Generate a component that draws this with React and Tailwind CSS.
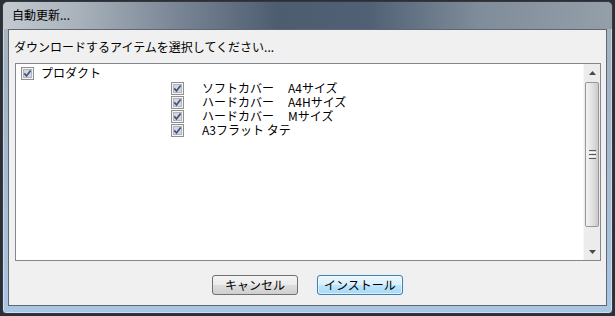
import React from "react";

const font = { fontFamily: '"Noto Sans CJK JP", "Noto Sans", sans-serif' };

function CheckBox() {
  return (
    <svg width="13" height="13" viewBox="0 0 13 13" className="shrink-0">
      <rect x="0.5" y="0.5" width="12" height="12" fill="#f4f4f4" stroke="#8e8f8f" />
      <rect x="2.5" y="2.5" width="8" height="8" fill="#d6d7d9" stroke="#b1b4b8" />
      <path d="M3.3 6.4 L5.5 9 L9.6 3.4" stroke="#3f5289" strokeWidth="1.7" fill="none" />
    </svg>
  );
}

function Row({ indent, children }) {
  return (
    <div className={`flex h-[14px] items-center ${indent ? "pl-[155px]" : "pl-[5px]"}`}>
      <CheckBox />
      <div className={`${indent ? "ml-[18px]" : "ml-[7px]"} flex text-[12px] leading-[12px] text-black whitespace-nowrap`}>
        {children}
      </div>
    </div>
  );
}

function Arrow({ up }) {
  return (
    <svg width="7" height="4" viewBox="0 0 7 4">
      <path d={up ? "M0 4 L3.5 0 L7 4 Z" : "M0 0 L3.5 4 L7 0 Z"} fill="#4a4a4a" />
    </svg>
  );
}

function ScrollBar() {
  return (
    <div className="flex w-[17px] flex-col bg-[#ececec] border-l border-[#f7f7f7]">
      <div className="flex h-[18px] items-center justify-center">
        <Arrow up />
      </div>
      <div className="mx-[1px] flex h-[145px] items-center justify-center rounded-[2px] border border-[#979797] bg-[linear-gradient(90deg,#f3f3f3_0%,#e2e2e2_50%,#cacaca_100%)]">
        <div className="flex flex-col gap-[1px]">
          <div className="h-[1px] w-[7px] bg-[#5a5a5a]" />
          <div className="h-[1px] w-[7px] bg-[#fafafa]" />
          <div className="h-[1px] w-[7px] bg-[#5a5a5a]" />
          <div className="h-[1px] w-[7px] bg-[#fafafa]" />
          <div className="h-[1px] w-[7px] bg-[#5a5a5a]" />
        </div>
      </div>
      <div className="flex-1" />
      <div className="flex h-[17px] items-center justify-center">
        <Arrow />
      </div>
    </div>
  );
}

export default function App() {
  return (
    <div className="h-[316px] w-[615px] bg-[#2c3036] pt-[1px] pl-[2px]" style={font}>
      <div className="flex h-[313px] w-[611px] flex-col rounded-t-[6px] rounded-b-[4px] border border-[#34393f] bg-[linear-gradient(180deg,#aab3bc_0%,#a2b3c5_25%,#a9c6e4_100%)] shadow-[inset_0_0_0_1px_rgba(255,255,255,0.45)]">
        <div className="flex h-[27px] items-center rounded-t-[5px] bg-[linear-gradient(90deg,#c3c9cf_0%,#aab3bc_12%,#7b8796_28%,#4d5d70_45%,#506175_60%,#7f8c99_78%,#949fa9_100%)] pl-[9px] pb-[1px]">
          <span className="text-[12px] text-black">自動更新...</span>
        </div>
        <div className="mx-[5px] flex h-[277px] flex-col border border-[#5f6872] bg-[#f0f0f0]">
          <div className="flex h-[33px] items-center pl-[5px] text-[12px] text-black">
            ダウンロードするアイテムを選択してください...
          </div>
          <div className="ml-[6px] flex h-[198px] w-[586px] border border-[#828790] bg-white">
            <div className="flex-1 pt-[2px]">
              <Row>プロダクト</Row>
              <div className="h-[1px]" />
              <Row indent>
                <span>ソフトカバー</span>
                <span className="ml-[14px]">A4サイズ</span>
              </Row>
              <Row indent>
                <span>ハードカバー</span>
                <span className="ml-[14px]">A4Hサイズ</span>
              </Row>
              <Row indent>
                <span>ハードカバー</span>
                <span className="ml-[14px]">Mサイズ</span>
              </Row>
              <Row indent>A3フラット タテ</Row>
            </div>
            <ScrollBar />
          </div>
          <div className="flex flex-1 items-center justify-center gap-[19px] pt-[4px]">
            <button className="h-[20px] w-[86px] rounded-[3px] border border-[#707070] bg-[linear-gradient(180deg,#f4f4f4_0%,#ebebeb_50%,#dddddd_51%,#cfcfcf_100%)] text-[12px] leading-[18px] text-black">
              キャンセル
            </button>
            <button className="h-[20px] w-[86px] rounded-[3px] border border-[#3c7fb1] bg-[linear-gradient(180deg,#eaf6fd_0%,#d9f0fc_50%,#bee6fd_51%,#a7d9f5_100%)] text-[12px] leading-[18px] text-black shadow-[inset_0_0_0_1px_rgba(255,255,255,0.6)]">
              インストール
            </button>
          </div>
        </div>
      </div>
    </div>
  );
}
